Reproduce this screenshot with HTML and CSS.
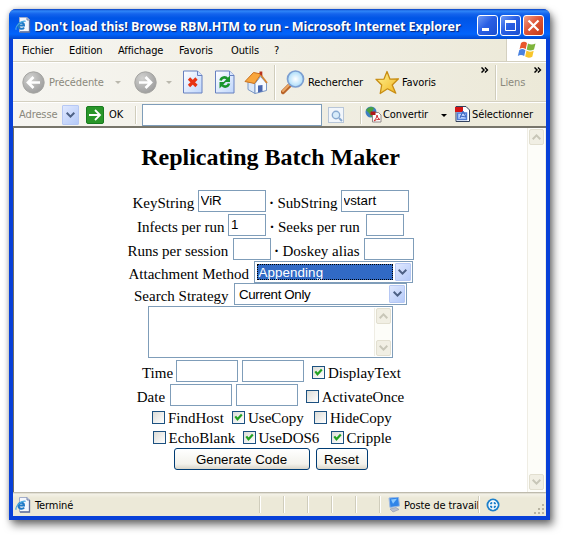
FILE: index.html
```html
<!DOCTYPE html>
<html lang="fr">
<head>
<meta charset="utf-8">
<title>Replicating Batch Maker</title>
<link rel="stylesheet" href="styles.css">
</head>
<body>
<svg width="0" height="0" class="defs" aria-hidden="true">
  <defs>
    <radialGradient id="gray" cx=".35" cy=".3" r=".8"><stop offset="0" stop-color="#d2d2d0"/><stop offset="1" stop-color="#999"/></radialGradient>
    <linearGradient id="sheet" x2="1" y2="1"><stop offset="0" stop-color="#fff"/><stop offset="1" stop-color="#bfd6fc"/></linearGradient>
    <linearGradient id="gold" x2="1" y2="1"><stop offset="0" stop-color="#fff59a"/><stop offset="1" stop-color="#f2b51c"/></linearGradient>
    <radialGradient id="lens"><stop offset="0" stop-color="#fff"/><stop offset="1" stop-color="#a9dcfa"/></radialGradient>
    <symbol id="down" viewBox="0 0 9 6"><path d="M.7.8 4.5 4.6 8.3.8" fill="none" stroke="currentColor" stroke-width="2"/></symbol>
    <symbol id="up" viewBox="0 0 9 6"><path d="M.7 5.2 4.5 1.4 8.3 5.2" fill="none" stroke="currentColor" stroke-width="2"/></symbol>
    <symbol id="check" viewBox="0 0 13 13"><path d="M3.3 5.3 5.5 8.2 9.8 3.6" fill="none" stroke="#21a121" stroke-width="2.2"/></symbol>
    <symbol id="ie" viewBox="0 0 16 16"><path d="M4.500 .5h7.500l2.500 2.500v12H4.500z" fill="#f4f7fd" stroke="#a3aecb"/><path d="M14.500 3v12H5" fill="none" stroke="#5f6f9c" stroke-width="1.300"/><path d="M12 .5V3h2.500" fill="#cbd5ea" stroke="#7482a8"/><path d="M3.500 8.500H9C9 4.800 3.600 4.800 3.400 8.500 3.400 12.200 7.800 12.600 9 10.400" fill="none" stroke="#1f79c6" stroke-width="2"/><path d="M1.200 12.800C-.2 9.500 6 3 10.600 4.300" fill="none" stroke="#45a7e2" stroke-width="1.200"/></symbol>
    <symbol id="more" viewBox="0 0 9 7"><path d="M1 .5 4 3.5 1 6.5M5 .5 8 3.5 5 6.5" fill="none" stroke="#000" stroke-width="1.6"/></symbol>
  </defs>
</svg>
<div class="window">
  <header class="titlebar">
    <svg class="title-icon" width="16" height="16"><use href="#ie"/></svg>
    <span class="title-text">Don't load this! Browse RBM.HTM to run - Microsoft Internet Explorer</span>
    <div class="caption">
      <span class="cap"><svg width="19" height="19"><path d="M4 13.5h7" stroke="#fff" stroke-width="3"/></svg></span>
      <span class="cap"><svg width="19" height="19"><path d="M4.5 5h10v9.500h-10z" fill="none" stroke="#fff"/><path d="M4 5.500h11" stroke="#fff" stroke-width="3"/></svg></span>
      <span class="cap cap-close"><svg width="19" height="19"><path d="m4.500 4.500 10 10m0-10-10 10" stroke="#fff" stroke-width="2.200"/></svg></span>
    </div>
  </header>
  <div class="frame">
    <nav class="menubar">
      <span class="m1">Fichier</span><span class="m2">Edition</span><span class="m3">Affichage</span><span class="m4">Favoris</span><span class="m5">Outils</span><span>?</span>
      <div class="flag"><svg width="20" height="18" viewBox="0 0 20 18"><path d="M4 2Q7-.5 10 2L8.700 8.300Q5.500 6 2.600 8z" fill="#e9572b"/><path d="M11 2.400Q14.500 4.500 18.500 2.500L17 8.600Q13 10.500 9.700 8.500z" fill="#7fb43c"/><path d="M2.300 9Q5.500 7 8.400 9.300L7.200 15Q4 13 .8 15z" fill="#4a82e0"/><path d="M9.500 9.600Q12.500 11.700 16.700 9.700L15.300 15.700Q11.500 17.700 8.200 15.500z" fill="#f8c52c"/></svg></div>
    </nav>
    <div class="toolbar">
      <svg class="back" width="23" height="23"><circle cx="11.500" cy="11.500" r="10.700" fill="url(#gray)" stroke="#a5a5a2"/><path d="M18 11.500H6.500M11.500 6 6 11.500 11.500 17" fill="none" stroke="#fff" stroke-width="2.700"/></svg>
      <span class="back-text dim">Précédente</span>
      <i class="tri light"></i>
      <svg class="fwd" width="23" height="23"><circle cx="11.500" cy="11.500" r="10.700" fill="url(#gray)" stroke="#a5a5a2"/><path d="M5 11.500h11.500M11.500 6l5.500 5.500-5.500 5.500" fill="none" stroke="#fff" stroke-width="2.700"/></svg>
      <i class="tri light"></i>
      <svg class="stop" width="20" height="24"><path d="M.5 1h14L19 5.500v17.500H.5z" fill="url(#sheet)" stroke="#6680c0"/><path d="M14.500 1v4.500H19" fill="#d9e6ff" stroke="#6680c0"/><path d="m6 8.500 7.500 7.500m0-7.500L6 16" stroke="#e83414" stroke-width="3.200"/></svg>
      <svg class="refresh" width="20" height="24"><path d="M.5 1h14L19 5.500v17.500H.5z" fill="url(#sheet)" stroke="#6680c0"/><path d="M14.500 1v4.500H19" fill="#d9e6ff" stroke="#6680c0"/><path d="M5.500 10.500C6.500 7 10.500 6.500 12.500 9M14 13.500c-1 3.500-5 4-7 1.500" fill="none" stroke="#18952d" stroke-width="2.600"/><path d="M15 5.500V12H8.700zM4.500 18.500V12h6.300z" fill="#18952d"/></svg>
      <svg class="home" width="24" height="24"><path d="m4 11 7 2.500v10L4 19.500z" fill="#dce8f8" stroke="#7a97c4"/><path d="m11 13.500 5.500-7 6 6.500v7.500L11 23.500z" fill="#f6faff" stroke="#7a97c4"/><path d="M14 15.500 18.500 15v6.500l-4.500 1z" fill="#4967b0"/><path d="m1 11.500 8.500-9L17 4l-6.500 9.500z" fill="#f9a63c" stroke="#c8711f"/><path d="m16.500 4.500 6.500 8.500" stroke="#d58632" stroke-width="1.800"/><path d="M15.500 1.500h2.800v4.500l-2.800-2z" fill="#b8321c"/></svg>
      <i class="vsep"></i>
      <svg class="search" width="24" height="26"><path d="m10 14-8 8" stroke="#b9642a" stroke-width="4.500" stroke-linecap="round"/><path d="m9.500 13.500-7.500 7.500" stroke="#eba968" stroke-width="2" stroke-linecap="round"/><circle cx="14.500" cy="9" r="8" fill="url(#lens)" stroke="#7d9fd1" stroke-width="1.700"/></svg>
      <span class="search-text">Rechercher</span>
      <svg class="star" width="25" height="25"><path d="m12 1.500 3 7.700 8.500-.4-6.300 6.200 3.600 8.200-8.300-4.400-7.300 4.700 1.500-8.500L1 9.300l8-.2z" fill="url(#gold)" stroke="#c88d13" stroke-width="1.300" stroke-linejoin="round"/></svg>
      <span class="fav-text">Favoris</span>
      <svg class="more" width="9" height="6"><use href="#more"/></svg>
      <i class="vsep"></i>
      <span class="links dim">Liens</span>
      <svg class="more more-end" width="9" height="6"><use href="#more"/></svg>
    </div>
    <div class="addressbar">
      <span class="addr dim">Adresse</span>
      <span class="drop addr-drop"><svg width="9" height="6"><use href="#down"/></svg></span>
      <svg class="go" width="18" height="18"><rect x=".5" y=".5" width="17" height="17" rx="1.500" fill="#299629" stroke="#187b20"/><path d="M3 9h11M9 4l5 5-5 5" fill="none" stroke="#fff" stroke-width="1.800"/></svg>
      <span class="ok">OK</span>
      <i class="vsep"></i>
      <input class="addr-field" aria-label="Adresse">
      <span class="lookup"><svg width="12" height="12"><circle cx="5" cy="5" r="3.700" fill="#d8ecfa" stroke="#8aaad0" stroke-width="1.400"/><path d="m8 8 3 3" stroke="#8aaad0" stroke-width="2"/></svg></span>
      <i class="vsep"></i>
      <svg class="convert" width="17" height="17"><circle cx="6" cy="6" r="5.500" fill="#3f7fc2"/><path d="M1 4Q5-1 9 2L7 6l2 4-3 1-2-4z" fill="#48a040"/><path d="M7.500 6.500h6l2.500 2.500v7H7.500z" fill="#fff" stroke="#918888"/><path d="M5.500 5.500h5v3.500h-5z" fill="#b01818"/><path d="M9 15q3-3 3-6 .5 4 3 4.500-4-.5-6 1.500" fill="none" stroke="#d23838"/></svg>
      <span class="conv-text">Convertir</span>
      <i class="tri"></i>
      <svg class="select-ico" width="15" height="16"><path d="M1 .5h10l3.500 3.500v11.500H1z" fill="#fff" stroke="#33425f"/><path d="M0 1h8v5H0z" fill="#d41414"/><path d="M2.500 7h9v6.500h-9z" fill="#b9d2ff" stroke="#4e7bd6" stroke-width="1.500"/><path d="m5 12 3-7 3 6-6-1" fill="none" stroke="#3a63be"/></svg>
      <span class="sel-text">Sélectionner</span>
    </div>
    <div class="client">
      <main class="page">
        <h1>Replicating Batch Maker</h1>
        <div class="row"><label class="key">KeyString</label><input class="text" value="ViR"><b class="dot">·</b><label class="sub">SubString</label><input class="text" value="vstart"></div>
        <div class="row"><label class="infects">Infects per run</label><input class="text narrow" value="1"><b class="dot">·</b><label class="seeks">Seeks per run</label><input class="text narrow"></div>
        <div class="row"><label class="runs">Runs per session</label><input class="text narrow"><b class="dot">·</b><label class="doskey">Doskey alias</label><input class="text alias"></div>
        <div class="row flush method-row"><label class="method">Attachment Method</label><div class="combo active"><span>Appending</span><i class="drop"><svg width="9" height="6"><use href="#down"/></svg></i></div></div>
        <div class="row flush"><label class="strategy">Search Strategy</label><div class="combo wide"><span>Current Only</span><i class="drop"><svg width="9" height="6"><use href="#down"/></svg></i></div></div>
        <div class="area"><div class="track"><i class="sbtn"><svg width="9" height="6"><use href="#up"/></svg></i><i class="sbtn"><svg width="9" height="6"><use href="#down"/></svg></i></div></div>
        <div class="row time-row"><label class="time">Time</label><input class="text mid"><input class="text mid"><i class="box"><svg width="13" height="13"><use href="#check"/></svg></i><label>DisplayText</label></div>
        <div class="row"><label class="date">Date</label><input class="text mid"><input class="text mid"><i class="box"></i><label>ActivateOnce</label></div>
        <div class="checks">
          <i class="box"></i><label class="c1">FindHost</label><i class="box"><svg width="13" height="13"><use href="#check"/></svg></i><label class="c2">UseCopy</label><i class="box"></i><label class="c3">HideCopy</label>
        </div>
        <div class="checks">
          <i class="box"></i><label class="c4">EchoBlank</label><i class="box"><svg width="13" height="13"><use href="#check"/></svg></i><label class="c5">UseDOS6</label><i class="box"><svg width="13" height="13"><use href="#check"/></svg></i><label class="c6">Cripple</label>
        </div>
        <div class="buttons"><button class="generate">Generate Code</button><button class="reset">Reset</button></div>
      </main>
      <div class="scroll"><i class="sbtn"><svg width="9" height="6"><use href="#up"/></svg></i><i class="sbtn"><svg width="9" height="6"><use href="#down"/></svg></i></div>
    </div>
    <footer class="status">
      <svg class="st-ie" width="16" height="16"><use href="#ie"/></svg>
      <span class="done">Terminé</span>
      <i class="vsep"></i><i class="vsep pane"></i><i class="vsep pane"></i><i class="vsep pane"></i><i class="vsep pane"></i><i class="vsep pane"></i>
      <svg class="pc" width="14" height="16"><path d="M2 1 11.500 0 12.500 9 3 10.500z" fill="#3184e8" stroke="#9db9e2"/><path d="m4 2.500 6-.7-4 5z" fill="#8cc9ff"/><path d="m3 12 6-1.500 3 2-6 2.500z" fill="#b8bfd0" stroke="#8d96ad" stroke-width=".6"/></svg>
      <span class="zone">Poste de travail</span>
      <i class="vsep"></i>
      <svg class="globe" width="14" height="14"><circle cx="7" cy="7" r="6.500" fill="#1c7fca"/><circle cx="7" cy="7" r="4" fill="none" stroke="#fff" stroke-width="1.300"/><path d="M7 2.500v9M3 7h8.500" stroke="#fff" stroke-width="1.500"/></svg>
      <svg class="grip" width="11" height="11"><g fill="#b8b4a2"><path d="M9 0h2v2H9zM9 4h2v2H9zM9 8h2v2H9zM5 4h2v2H5zM5 8h2v2H5zM1 8h2v2H1z"/></g></svg>
    </footer>
  </div>
</div>
</body>
</html>
```

FILE: styles.css
```css
* { box-sizing: border-box; }
body {
  margin: 0;
  padding: 9px 0 0 9px;
  height: 535px;
  overflow: hidden;
  background: #fff;
  font: 11px/14px "DejaVu Sans Condensed", "DejaVu Sans", sans-serif;
  letter-spacing: -0.1px;
  color: #000;
}
.defs { position: absolute; }
svg { display: block; flex: none; }
i { display: block; flex: none; font-style: normal; }
span { flex: none; white-space: nowrap; }

.window {
  width: 541px;
  height: 511px;
  background: #0840d8;
  border-radius: 7px 7px 0 0;
  box-shadow: 3px 5px 9px rgba(0, 0, 0, 0.55), 0 0 5px rgba(0, 0, 0, 0.2);
}

/* title bar */
.titlebar {
  display: flex;
  height: 30px;
  padding-left: 6px;
  border-radius: 7px 7px 0 0;
  background: linear-gradient(#0a3fc4 0, #2f86f8 2px, #1463ec 5px, #0055e6 9px, #025cf4 20px, #0264fc 25px, #0148cf 30px);
}
.title-icon { margin-top: 8px; }
.title-text {
  width: 441px;
  margin: 9px 0 0 3px;
  color: #fff;
  font: bold 12.5px/18px "Open Sans", sans-serif;
  letter-spacing: -0.06px;
  text-shadow: 1px 1px 1px #0a2478;
}
.caption { display: flex; gap: 2px; margin: 6px 0 0 2px; }
.cap {
  width: 21px;
  height: 21px;
  border: 1px solid #fff;
  border-radius: 3px;
  background: linear-gradient(135deg, #6f9af5, #2a5fe4 45%, #1b4fd0);
}
.cap-close { background: linear-gradient(135deg, #f0a088, #e0573a 45%, #c43a14); }

.frame {
  margin: 0 4px;
  height: 477px;
  background: #ece9d8;
  overflow: hidden;
}
.dim { color: #8a887c; }
.tri {
  width: 0;
  height: 0;
  border: 3px solid transparent;
  border-top-color: #000;
  border-bottom: 0;
}
.tri.light { border-top-color: #bab8ad; }
.vsep { width: 2px; border-left: 1px solid #d0cdbc; border-right: 1px solid #fff; }

.menubar {
  display: flex;
  height: 23px;
  padding: 5px 0 0 9px;
  border-bottom: 1px solid #d4d0c0;
  background: linear-gradient(90deg, #f6f5f1, #ece9d8);
}
.m1 { width: 47px; }
.m2 { width: 49px; }
.m3 { width: 61px; }
.m4 { width: 52px; }
.m5 { width: 43px; }
.flag {
  width: 40px;
  height: 22px;
  margin: -5px 0 0 auto;
  padding: 2px 0 0 10px;
  background: #fff;
  border-left: 1px solid #d4d0c0;
}

.toolbar {
  display: flex;
  height: 40px;
  border-top: 1px solid #fff;
  border-bottom: 1px solid #d4d0c0;
  background: linear-gradient(90deg, #f6f5f1, #ece9d8);
}
.toolbar span { margin-top: 13px; }
.back { margin: 8px 0 0 9px; }
.back-text { width: 66px; margin-left: 4px; }
.toolbar .tri { margin-top: 18px; }
.toolbar .fwd { margin: 8px 9px 0 13px; }
.stop { margin: 7px 0 0 11px; }
.refresh { margin: 7px 0 0 12px; }
.home { margin: 7px 0 0 9px; }
.toolbar .vsep { margin: 2px 0 1px 6px; }
.search { margin: 7px 0 0 5px; }
.search-text { width: 67px; margin-left: 3px; }
.star { margin-top: 7px; }
.fav-text { width: 78px; margin-left: 2px; }
.more { margin-top: 4px; }
.more + .vsep { margin-left: 6px; }
.links { width: 33px; margin-left: 3px; }

.addressbar {
  display: flex;
  height: 26px;
  padding-left: 6px;
  border-top: 1px solid #fff;
  border-bottom: 2px solid #77756a;
  background: linear-gradient(90deg, #f6f5f1, #ece9d8);
}
.addressbar span { margin-top: 5px; }
.addr { width: 43px; }
.drop {
  display: flex;
  align-items: center;
  justify-content: center;
  width: 17px;
  color: #4d6185;
  border: 1px solid #b6c8f4;
  border-radius: 1px;
  background: linear-gradient(135deg, #dfe8ff, #b5caf8);
}
.addressbar .addr-drop { height: 20px; margin: 2px 0 0; }
.go { margin: 3px 0 0 7px; }
.ok { width: 21px; margin-left: 5px; }
.addressbar .vsep { margin: 3px 0 2px 5px; }
.addr-field {
  width: 180px;
  height: 22px;
  margin: 1px 0 0 5px;
  border: 1px solid #7f9db9;
  background: #fff;
}
.addressbar .lookup {
  width: 16px;
  height: 16px;
  margin: 4px 0 0 6px;
  padding: 2px;
  border: 1px solid #b8c6d8;
  background: #f2f6fb;
}
.addressbar .lookup + .vsep { margin-left: 16px; }
.convert { margin: 3px 0 0 3px; }
.conv-text { width: 58px; margin-left: 1px; }
.addressbar .tri { margin-top: 11px; }
.select-ico { margin: 3px 0 0 8px; }
.sel-text { margin-left: 2px; }

/* page area */
.client {
  display: flex;
  height: 364px;
  border-left: 1px solid #716f64;
  border-right: 1px solid #f1efe2;
  background: #fff;
}
.page {
  width: 513px;
  font: 15px/22px "Liberation Serif", serif;
  letter-spacing: 0;
}
h1 {
  margin: 15px 0 18px;
  font: bold 24px/29px "Liberation Serif", serif;
  text-align: center;
}
.row {
  display: flex;
  justify-content: center;
  height: 22px;
  margin-bottom: 2px;
}
.row.flush { margin-bottom: 0; }
.method-row { margin-top: -1px; }
.row label, .dot { flex: none; line-height: 26px; white-space: nowrap; }
.key { width: 65px; }
.sub { width: 63px; }
.infects { width: 91px; }
.seeks { width: 88px; }
.runs { width: 105px; }
.doskey { width: 81px; }
.method { width: 125px; }
.strategy { width: 100px; }
.time-row { padding-left: 2px; }
.time { width: 34px; }
.date { width: 33px; }
.dot { width: 12px; text-align: center; }
.text {
  flex: none;
  width: 68px;
  height: 22px;
  padding: 0 2px 1px;
  border: 1px solid #7f9db9;
  background: #fff;
  font: 13.33px/18px "Liberation Sans", sans-serif;
}
.narrow { width: 38px; }
.alias { width: 50px; }
.mid { width: 62px; }
.mid + .mid { margin-left: 4px; }
.combo {
  display: flex;
  justify-content: space-between;
  width: 159px;
  height: 22px;
  padding: 1px;
  border: 1px solid #7f9db9;
  font: 13.33px/18px "Liberation Sans", sans-serif;
}
.combo.wide { width: 173px; }
.combo span { padding: 1px 0 0 3px; letter-spacing: -0.35px; }
.combo .drop { width: 16px; height: 18px; }
.combo.active span {
  width: 136px;
  height: 16px;
  margin: 1px;
  padding-left: 2px;
  line-height: 15px;
  letter-spacing: 0.1px;
  color: #fff;
  background: #316ac5;
  outline: 1px dotted #000;
  outline-offset: -1px;
}
.area {
  display: flex;
  justify-content: flex-end;
  width: 245px;
  height: 52px;
  margin: 1px auto 2px 134px;
  padding: 1px;
  border: 1px solid #7f9db9;
}
.track, .scroll {
  display: flex;
  flex-direction: column;
  justify-content: space-between;
  width: 17px;
  padding-left: 1px;
  background: #fdfdf9;
  border-left: 1px solid #efede4;
}
.sbtn {
  display: flex;
  align-items: center;
  justify-content: center;
  width: 15px;
  height: 16px;
  color: #c8c6b8;
  border: 1px solid #e2dfd0;
  border-radius: 2px;
  background: #f1efe4;
}
.scroll { padding: 1px 0 2px 1px; }
.box {
  width: 13px;
  height: 13px;
  margin-right: 3px;
  border: 1px solid #1c5180;
  background: linear-gradient(135deg, #dcdcd7, #fff);
}
.box svg { margin: -1px; }
.row .box { margin: 6px 3px 0 8px; }
.checks {
  display: flex;
  justify-content: center;
  height: 13px;
  margin: 5px 0 7px;
  padding-left: 4px;
}
.checks label { flex: none; line-height: 14px; white-space: nowrap; }
.c1 { width: 64px; }
.c2 { width: 66px; }
.c3 { width: 63px; }
.c4 { width: 74px; }
.c5 { width: 72px; }
.c6 { width: 46px; }
.buttons { display: flex; gap: 6px; justify-content: center; margin-top: -3px; }
button {
  height: 22px;
  padding: 0;
  border: 1px solid #003c74;
  border-radius: 3px;
  background: linear-gradient(#fff, #f3f2ec 75%, #d9d5c9);
  font: 13.33px/19px "Liberation Sans", sans-serif;
}
.generate { width: 136px; }
.reset { width: 52px; }

/* status bar */
.status {
  display: flex;
  height: 24px;
  padding: 5px 0 0 2px;
  background: linear-gradient(#aca899 0, #f4f2e8 2px, #ece9d8 6px, #ece9d8);
}
.done { width: 224px; margin: 2px 0 0 4px; }
.status .vsep { height: 17px; margin-top: -1px; }
.pane { margin-left: 22px; }
.pc { margin-left: 6px; }
.zone { width: 74px; margin: 2px 0 0 3px; overflow: hidden; }
.globe { margin: 1px 0 0 6px; }
.grip { margin: 7px 2px 0 auto; }
```
